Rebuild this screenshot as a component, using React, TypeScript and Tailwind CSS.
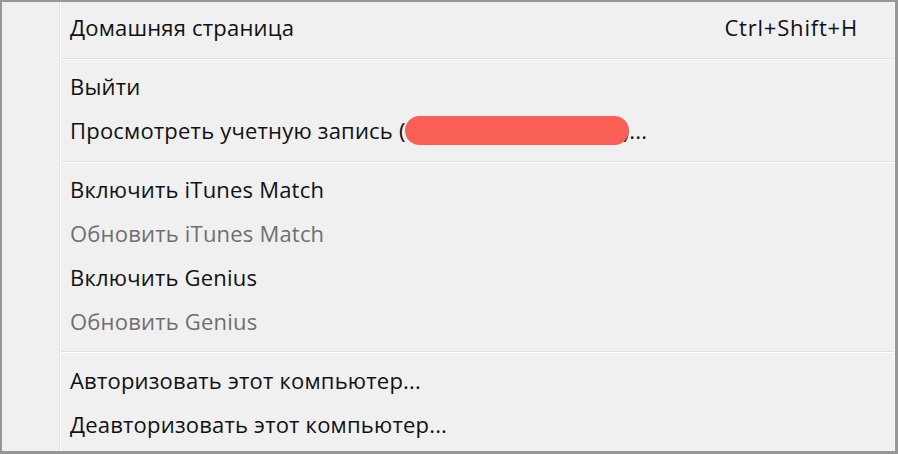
import React from "react";

type Item =
  | { kind: "item"; label: React.ReactNode; shortcut?: string; disabled?: boolean }
  | { kind: "sep" };

const items: Item[] = [
  { kind: "item", label: "Домашняя страница", shortcut: "Ctrl+Shift+H" },
  { kind: "sep" },
  { kind: "item", label: "Выйти" },
  {
    kind: "item",
    label: (
      <span className="relative inline-flex items-center">
        <span>Просмотреть учетную запись (</span>
        <span className="inline-block w-[224px] h-[29px] rounded-full bg-[#fa5f56] -ml-[1px] -mr-[6px] relative z-10" />
        <span>)...</span>
      </span>
    ),
  },
  { kind: "sep" },
  { kind: "item", label: "Включить iTunes Match" },
  { kind: "item", label: "Обновить iTunes Match", disabled: true },
  { kind: "item", label: "Включить Genius" },
  { kind: "item", label: "Обновить Genius", disabled: true },
  { kind: "sep" },
  { kind: "item", label: "Авторизовать этот компьютер..." },
  { kind: "item", label: "Деавторизовать этот компьютер..." },
];

export default function App() {
  return (
    <div
      className="w-[898px] h-[454px] bg-[#f0f0f0] border-t-2 border-l-2 border-r-[3px] border-b-[3px] border-[#979797] flex"
      style={{ fontFamily: '"Open Sans", "Noto Sans", sans-serif' }}
    >
      <div className="w-[57px] shrink-0" />
      <div className="w-px shrink-0 bg-[#e2e3e3]" />
      <div className="w-px shrink-0 bg-white" />
      <div className="flex-1 flex flex-col pt-[4px] pb-[4px] border-r border-b border-[#f7f7f7]">
        {items.map((it, i) =>
          it.kind === "sep" ? (
            <div key={i} className="h-[15px] flex flex-col pt-[8px]">
              <div className="h-px bg-[#e0e0e0]" />
              <div className="h-px bg-white" />
            </div>
          ) : (
            <div
              key={i}
              className={
                "h-[44px] flex items-center justify-between pl-[9px] pr-[36px] text-[22px] tracking-[0.2px] " +
                (it.disabled ? "text-[#6f6f6f]" : "text-[#111]")
              }
            >
              <span className="whitespace-nowrap">{it.label}</span>
              {it.shortcut && <span className="whitespace-nowrap tracking-[0.8px]">{it.shortcut}</span>}
            </div>
          )
        )}
      </div>
    </div>
  );
}
